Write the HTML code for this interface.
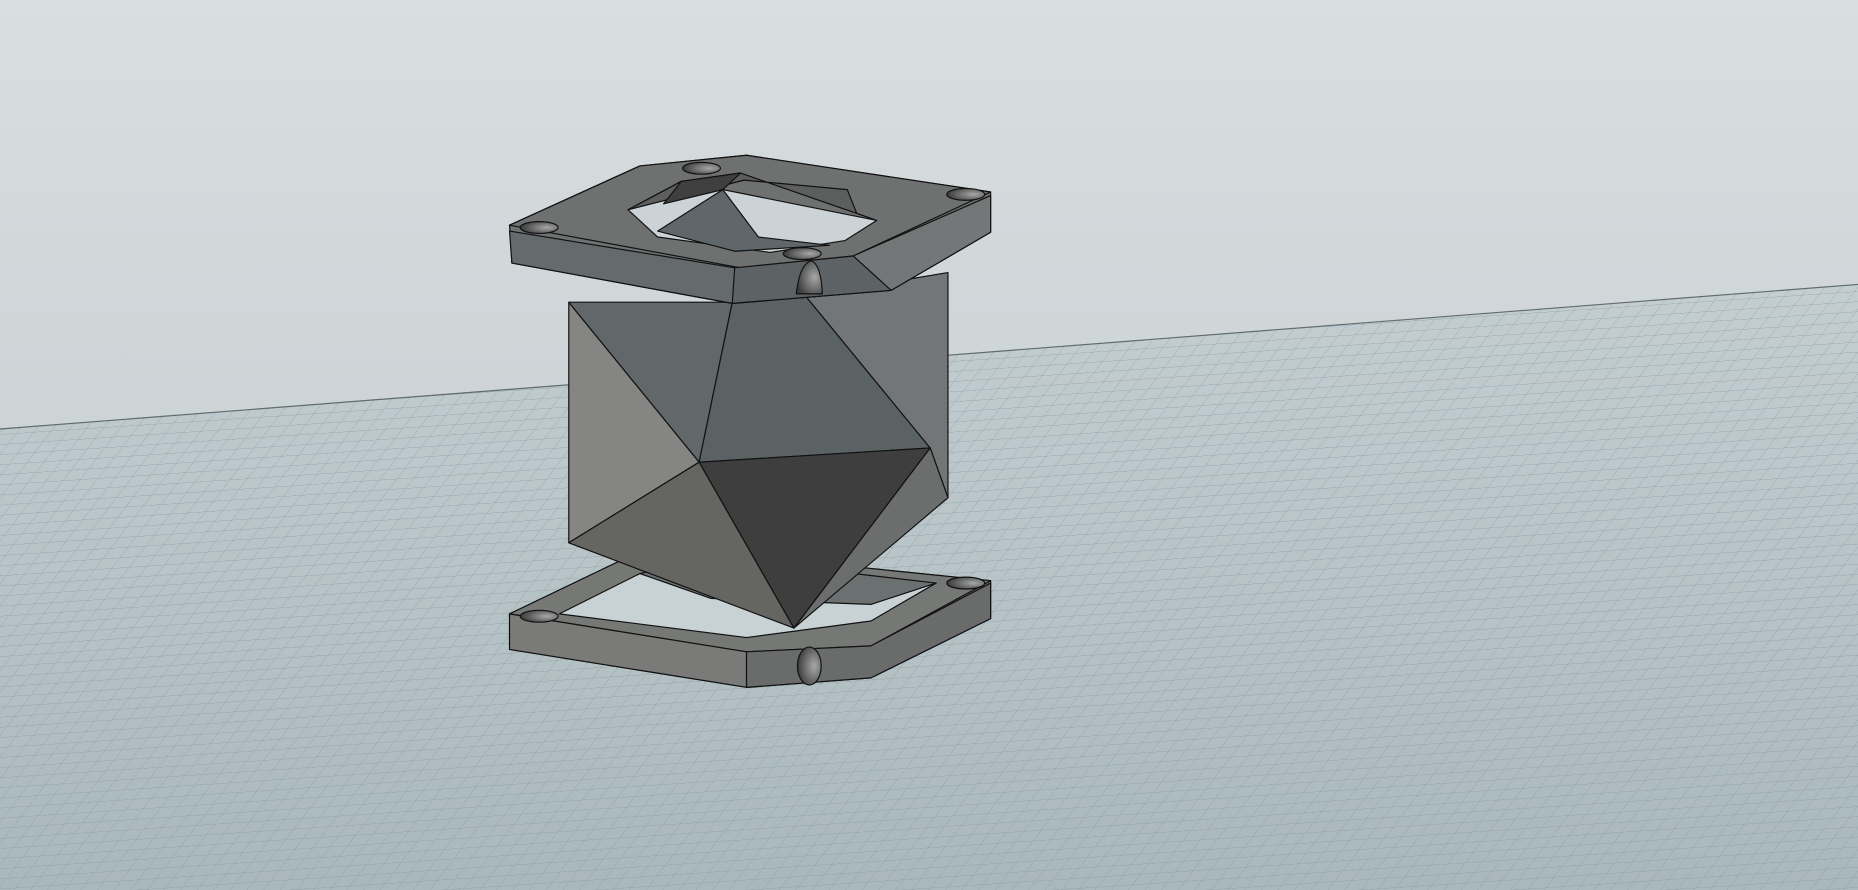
<!DOCTYPE html>
<html><head><meta charset="utf-8"><style>html,body{margin:0;padding:0;overflow:hidden;background:#ccd3d6}svg{display:block}</style></head>
<body>
<svg width="1858" height="890" viewBox="0 0 1568 751" preserveAspectRatio="none" xmlns="http://www.w3.org/2000/svg">
<defs>
<linearGradient id="sky" x1="0" y1="0" x2="0" y2="1"><stop offset="0" stop-color="#d9dee0"/><stop offset="1" stop-color="#bfc8cb"/></linearGradient>
<linearGradient id="gnd" x1="0" y1="0" x2="0" y2="1"><stop offset="0" stop-color="#c4ced1"/><stop offset="1" stop-color="#a9b8bd"/></linearGradient>
<pattern id="grid" width="14" height="9" patternUnits="userSpaceOnUse" patternTransform="skewX(-40) rotate(-4)"><path d="M0 0H14M0 0V9" stroke="#82979d" stroke-width="0.7" fill="none" opacity="0.8"/></pattern>
<radialGradient id="hole" cx="0.7" cy="0.5" r="0.7"><stop offset="0" stop-color="#a6a8a6"/><stop offset="1" stop-color="#3a3b3a"/></radialGradient>
</defs>
<rect width="1568" height="751" fill="url(#sky)"/>
<polygon points="0,362 1568,240 1568,751 0,751" fill="url(#gnd)"/>
<polygon points="0,362 1568,240 1568,751 0,751" fill="url(#grid)"/>
<line x1="0" y1="362" x2="1568" y2="240" stroke="#5f6b6e" stroke-width="1"/>
<g stroke="#111" stroke-width="1" stroke-linejoin="round">
<polygon points="430,518 530,470 600,466 836,490 836,522 735,572 630,580 430,548" fill="#6c6e6c"/>
<polygon points="430,518 530,470 600,466 836,490 735,545 630,550" fill="#767876"/>
<polygon points="472,518 540,484 790,492 735,524 630,538" fill="#c8d1d4"/>
<polygon points="540,484 600,470 790,492 735,510 600,505" fill="#6b7071"/>
<polygon points="430,518 630,550 630,580 430,548" fill="#7a7b78"/>
<polygon points="630,550 735,545 836,492 836,522 735,572 630,580" fill="#6a6c6b"/>
<ellipse cx="455" cy="520" rx="16" ry="5" fill="url(#hole)"/>
<ellipse cx="815" cy="492" rx="16" ry="5" fill="url(#hole)"/>
<ellipse cx="683" cy="562" rx="10" ry="16" fill="url(#hole)"/>
<polygon points="480,255 590,390 480,458" fill="#858683"/>
<polygon points="480,255 618,255 590,390" fill="#626869"/>
<polygon points="618,255 680,250 785,378 590,390" fill="#5a6263"/>
<polygon points="680,250 800,230 800,420 785,378" fill="#727677"/>
<polygon points="590,390 785,378 670,530" fill="#3d3e3d"/>
<polygon points="480,458 590,390 670,530" fill="#656562"/>
<polygon points="785,378 800,420 670,530" fill="#6c6e6d"/>
<polygon points="430,190 540,140 630,131 836,162 836,196 752,245 618,256 432,222" fill="#6e7272"/>
<polygon points="430,190 540,140 630,131 836,162 720,216 625,226" fill="#6f7170"/>
<polygon points="620,226 752,245 618,256 432,222 430,195" fill="#656b6c"/>
<polygon points="720,216 836,165 836,196 752,245" fill="#737777"/>
<polygon points="620,226 720,216 752,245 618,256" fill="#5d6364"/>
<polygon points="530,177 575,153 740,186 713,203 650,213 555,200" fill="#cbd3d6"/>
<polygon points="560,195 610,160 640,200" fill="#626b70" stroke-width="0.5"/>
<polygon points="530,177 575,153 625,146 740,186 723,180 715,160 628,152" fill="#5d5f5e"/>
<polygon points="575,153 625,146 610,160 560,172" fill="#3e3f3e"/>
<polygon points="555,195 610,160 640,200 700,207 620,212" fill="#5f676b"/>
<ellipse cx="455" cy="192" rx="16" ry="5" fill="url(#hole)"/>
<ellipse cx="592" cy="142" rx="16" ry="5" fill="url(#hole)"/>
<ellipse cx="815" cy="164" rx="16" ry="5" fill="url(#hole)"/>
<ellipse cx="677" cy="214" rx="16" ry="5" fill="url(#hole)"/>
<path d="M672,248 Q675,222 685,220 Q693,224 694,248 Z" fill="url(#hole)"/>
</g>
</svg>
</body></html>
